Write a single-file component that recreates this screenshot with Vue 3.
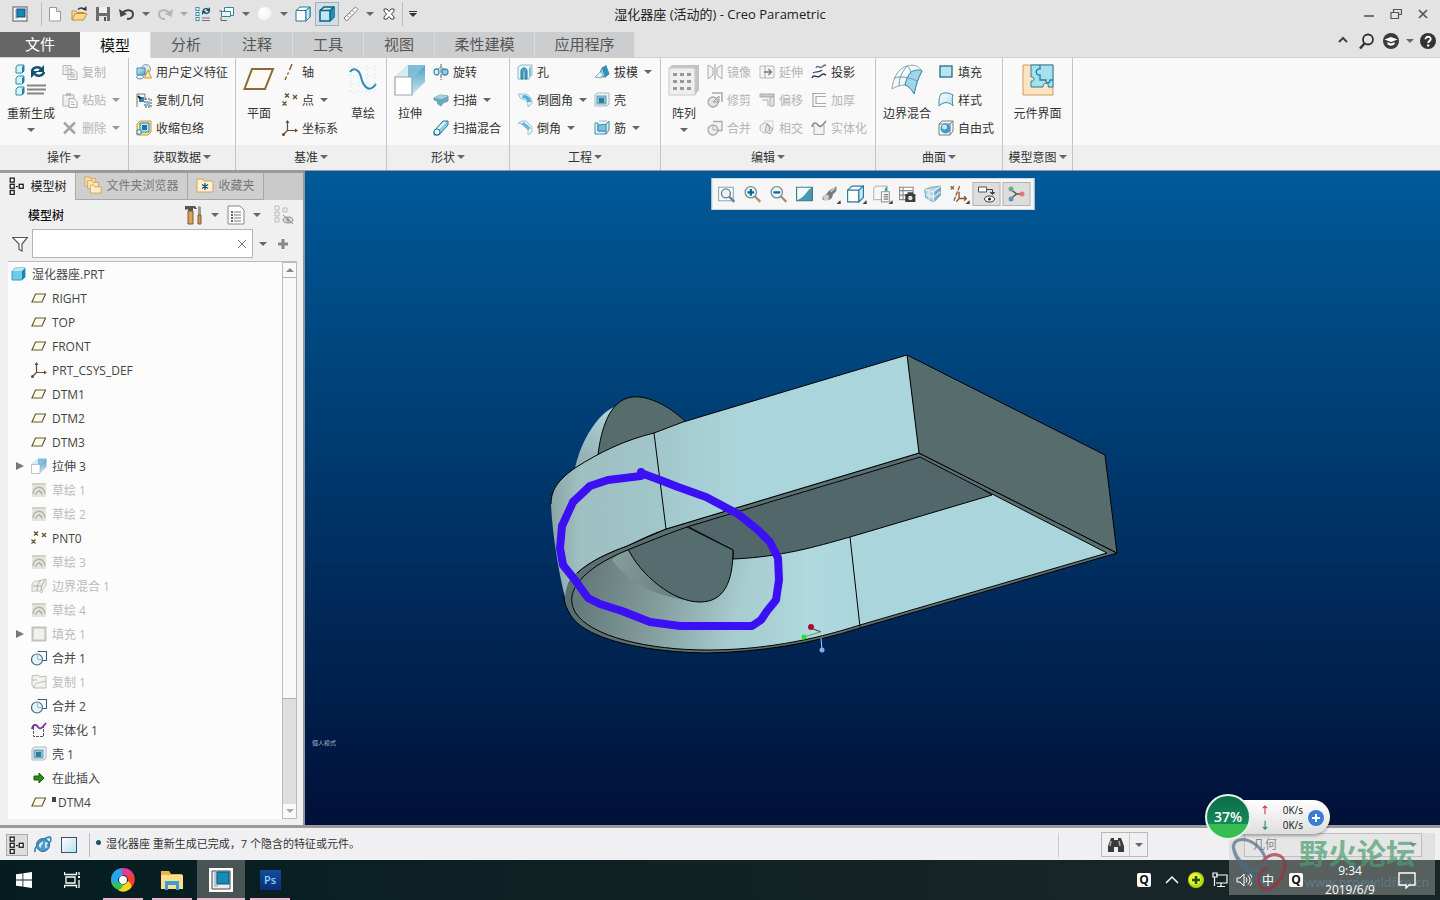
<script setup>
  import { ref } from 'vue'

  const quickTools = [
    { icon: 'new', label: '新建' },
    { icon: 'open', label: '打开' },
    { icon: 'save', label: '保存' },
    { icon: 'undo', label: '撤消', drop: true },
    { icon: 'redo', label: '重做', drop: true, disabled: true },
    { icon: 'regen-small', label: '重新生成' },
    { icon: 'windows', label: '窗口', drop: true },
    { icon: 'sphere', label: '外观', drop: true },
    { icon: 'cube', label: '消隐' },
    { icon: 'cube-shaded', label: '着色', on: true },
    { icon: 'ruler', label: '测量', drop: true },
    { icon: 'close-win', label: '关闭窗口' },
  ]

  const tabs = ['模型', '分析', '注释', '工具', '视图', '柔性建模', '应用程序']
  const activeTab = ref('模型')

  // a block is either one big button or a column of three small ones
  const groups = [
    { label: '操作', blocks: [
      { big: 'regen', text: '重新生成', drop: true, wide: true },
      { rows: [
        { icon: 'copy', text: '复制', off: true },
        { icon: 'paste', text: '粘贴', off: true, drop: true },
        { icon: 'delete', text: '删除', off: true, drop: true },
      ] },
    ] },
    { label: '获取数据', blocks: [
      { rows: [
        { icon: 'udf', text: '用户定义特征' },
        { icon: 'copygeom', text: '复制几何' },
        { icon: 'shrink', text: '收缩包络' },
      ] },
    ] },
    { label: '基准', blocks: [
      { big: 'plane-big', text: '平面' },
      { rows: [
        { icon: 'axis', text: '轴' },
        { icon: 'points', text: '点', drop: true },
        { icon: 'csys', text: '坐标系' },
      ] },
      { big: 'sketch', text: '草绘' },
    ] },
    { label: '形状', blocks: [
      { big: 'extrude', text: '拉伸' },
      { rows: [
        { icon: 'revolve', text: '旋转' },
        { icon: 'sweep', text: '扫描', drop: true },
        { icon: 'swept', text: '扫描混合' },
      ] },
    ] },
    { label: '工程', blocks: [
      { rows: [
        { icon: 'hole', text: '孔' },
        { icon: 'round', text: '倒圆角', drop: true },
        { icon: 'chamfer', text: '倒角', drop: true },
      ] },
      { rows: [
        { icon: 'draft', text: '拔模', drop: true },
        { icon: 'shell', text: '壳' },
        { icon: 'rib', text: '筋', drop: true },
      ] },
    ] },
    { label: '编辑', blocks: [
      { big: 'pattern', text: '阵列', drop: true },
      { rows: [
        { icon: 'mirror', text: '镜像', off: true },
        { icon: 'trim', text: '修剪', off: true },
        { icon: 'merge-off', text: '合并', off: true },
      ] },
      { rows: [
        { icon: 'extend', text: '延伸', off: true },
        { icon: 'offset', text: '偏移', off: true },
        { icon: 'intersect', text: '相交', off: true },
      ] },
      { rows: [
        { icon: 'project', text: '投影' },
        { icon: 'thicken', text: '加厚', off: true },
        { icon: 'solidify-off', text: '实体化', off: true },
      ] },
    ] },
    { label: '曲面', blocks: [
      { big: 'boundary', text: '边界混合', wide: true },
      { rows: [
        { icon: 'fill', text: '填充' },
        { icon: 'style', text: '样式' },
        { icon: 'freestyle', text: '自由式' },
      ] },
    ] },
    { label: '模型意图', blocks: [
      { big: 'component', text: '元件界面', full: true },
    ] },
  ]

  const tree = [
    { icon: 'plane', text: 'RIGHT' },
    { icon: 'plane', text: 'TOP' },
    { icon: 'plane', text: 'FRONT' },
    { icon: 'csys', text: 'PRT_CSYS_DEF' },
    { icon: 'plane', text: 'DTM1' },
    { icon: 'plane', text: 'DTM2' },
    { icon: 'plane', text: 'DTM3' },
    { icon: 'extrude', text: '拉伸 3', expand: true },
    { icon: 'sketch-off', text: '草绘 1', off: true },
    { icon: 'sketch-off', text: '草绘 2', off: true },
    { icon: 'points', text: 'PNT0' },
    { icon: 'sketch-off', text: '草绘 3', off: true },
    { icon: 'boundary-off', text: '边界混合 1', off: true },
    { icon: 'sketch-off', text: '草绘 4', off: true },
    { icon: 'fill-off', text: '填充 1', off: true, expand: true },
    { icon: 'merge', text: '合并 1' },
    { icon: 'copy-off', text: '复制 1', off: true },
    { icon: 'merge', text: '合并 2' },
    { icon: 'solidify', text: '实体化 1' },
    { icon: 'shell', text: '壳 1' },
    { icon: 'insert', text: '在此插入' },
    { icon: 'plane', text: 'DTM4', mark: true },
  ]

  const viewTools = [
    { icon: 'refit', label: '重新调整' },
    { icon: 'zoom-in', label: '放大' },
    { icon: 'zoom-out', label: '缩小' },
    { icon: 'repaint', label: '重画' },
    { icon: 'render', label: '渲染选项', more: true },
    { icon: 'cube', label: '显示样式', more: true },
    { icon: 'saved-view', label: '已保存方向', more: true },
    { icon: 'view-mgr', label: '视图管理器' },
    { icon: 'persp', label: '透视图' },
    { icon: 'datum', label: '基准显示', more: true },
    { icon: 'annot', label: '注释显示', on: true },
    { icon: 'spin', label: '旋转中心', on: true },
  ]

  const taskItems = [
    { icon: 'browser', label: '浏览器' },
    { icon: 'folder', label: '文件资源管理器' },
    { icon: 'creo-app', label: 'Creo Parametric', on: true },
    { icon: 'ps', label: 'Photoshop' },
  ]

  const filter = ref('')
  const scope = ref('几何')
</script>

<template>
  <div class="page">
    <svg class="sprite" aria-hidden="true">
      <defs>
        <linearGradient id="g-blue" x1="0" y1="0" x2="1" y2="1"><stop offset="0" stop-color="#d5eef8" /><stop offset="1" stop-color="#4ba3c7" /></linearGradient>
        <linearGradient id="g-pale" x1="0" y1="0" x2="1" y2="1"><stop offset="0" stop-color="#fff" /><stop offset="1" stop-color="#b4dff0" /></linearGradient>
        <linearGradient id="g-side" x1="0" y1="0" x2="0" y2="1"><stop offset="0" stop-color="#4f9fc2" /><stop offset="1" stop-color="#c9e8f2" /></linearGradient>
        <radialGradient id="g-ball" cx=".35" cy=".3" r=".8"><stop offset="0" stop-color="#fff" /><stop offset=".75" stop-color="#f4f4f4" /><stop offset="1" stop-color="#cfcfcf" /></radialGradient>
      </defs>

      <symbol id="creo" viewBox="0 0 16 16"><rect x="1" y="1" width="14" height="14" fill="#fff" stroke="#556" stroke-width="1" /><rect x="3" y="3" width="3" height="10" fill="#b9cbd4" /><rect x="5" y="3" width="8" height="8" fill="#1686b4" stroke="#144f72" /></symbol>
      <symbol id="new" viewBox="0 0 16 16"><path d="M2.500 1.500h7l4 4v9.500h-11z" fill="#fff" stroke="#999" /><path d="M9.500 1.500v4h4" fill="#eee" stroke="#999" /></symbol>
      <symbol id="open" viewBox="0 0 16 16"><path d="M1 14V5h4l1 1.500h7V9" fill="#f8e0a0" stroke="#c58f36" /><path d="M1 14l3-6.500h12L12.500 14z" fill="#fbd98a" stroke="#c58f36" /><path d="M7 3.500c2-2 4-2 6-.500" fill="none" stroke="#333" stroke-width="1.500" /><path d="M15.500 0v5l-4-1.500z" fill="#333" /></symbol>
      <symbol id="save" viewBox="0 0 16 16"><path d="M1 1h14v14H1z" fill="#6d6d6d" /><path d="M4 1h8v6H4z" fill="#f0f0f0" /><path d="M4 10h8v5H4z" fill="#e2e2e2" /><path d="M9 11h2v4H9z" fill="#555" /></symbol>
      <symbol id="undo" viewBox="0 0 16 16"><path d="M3 8C6 3 14 3 14 8.500c0 3-3 4.500-6 4.500" fill="none" stroke="#444" stroke-width="2" /><path d="M0 3l1.500 8L8 8z" fill="#444" /></symbol>
      <symbol id="redo" viewBox="0 0 16 16"><path d="M13 8C10 3 2 3 2 8.500 2 11.500 5 13 8 13" fill="none" stroke="#b5b5b5" stroke-width="2" /><path d="M16 3l-1.500 8L8 8z" fill="#b5b5b5" /></symbol>
      <symbol id="regen-small" viewBox="0 0 16 16"><g fill="#fff" stroke="#3a8fb5"><rect x="1" y="1.500" width="3" height="3" /><rect x="1" y="6.500" width="3" height="3" /><rect x="1" y="11.500" width="3" height="3" /></g><path d="M7 12h8M7 14.500h8" stroke="#777" /><path d="M8 5c1-3 4-3 5.500-1M14.500 5c-1 3-4 3-5.500 1" fill="none" stroke="#0f5974" stroke-width="1.500" /><path d="M15 1v4h-4zM7 9V5h4z" fill="#0f5974" /></symbol>
      <symbol id="windows" viewBox="0 0 16 16"><path d="M5.500 1.500h9v8h-9z" fill="#fff" stroke="#3b7fa0" /><path d="M2.500 5.500h9v5h-9z" fill="#e8f6fb" stroke="#3b7fa0" /><path d="M2 11v3.500h6M0 5h3" fill="none" stroke="#666" /></symbol>
      <symbol id="sphere" viewBox="0 0 16 16"><circle cx="8" cy="8" r="7" fill="url(#g-ball)" /></symbol>
      <symbol id="cube" viewBox="0 0 16 16"><path d="M1 4.500l4-3.500h10v10l-4 4H1z" fill="#fff" stroke="#23789b" /><path d="M1 4.500h10V15M11 4.500L15 1" fill="none" stroke="#23789b" /><path d="M11 4.500L15 1v10l-4 4z" fill="#c6e9f3" stroke="#23789b" /></symbol>
      <symbol id="cube-shaded" viewBox="0 0 16 16"><path d="M1 4.500l4-3.500h10v10l-4 4H1z" fill="#bfe7f2" stroke="#0f5f84" stroke-width="1.500" /><path d="M11 4.500L15 1v10l-4 4z" fill="#1c93b8" /><path d="M1 4.500h10V15M11 4.500L15 1" fill="none" stroke="#0f5f84" stroke-width="1.500" /></symbol>
      <symbol id="ruler" viewBox="0 0 16 16"><path d="M1 12L12.500 1 15 3.500 3.500 15z" fill="#fff" stroke="#777" /><path d="M4 9.500l1.500 1.500M6.500 7l1.500 1.500M9 4.500l1.500 1.500" stroke="#777" /></symbol>
      <symbol id="close-win" viewBox="0 0 16 16"><path d="M3 3h3l2 2.500L10 3h3v2l-2.500 3 2.500 3v2h-3l-2-2.500L6 13H3v-2l2.500-3L3 5z" fill="#fff" stroke="#444" /></symbol>

      <symbol id="regen" viewBox="0 0 32 32"><g fill="#d9f1f9" stroke="#2c8bb2"><path d="M1 3l2-2h6v6L7 9H1zM1 14l2-2h6v6l-2 2H1zM1 25l2-2h6v6l-2 2H1z" /></g><path d="M7 3v6l2-2V1zM7 14v6l2-2v-6zM7 25v6l2-2v-6z" fill="#1f7fa8" /><path d="M12 21.500h19M12 25.500h19M12 29.500h17" stroke="#858585" stroke-width="2" /><path d="M17 7c1-4 7-5 9-2M29 8c-1 4-7 5-9 2" fill="none" stroke="#0e536b" stroke-width="2.500" /><path d="M29 1v7h-7zM16 14V7h7z" fill="#0e536b" /></symbol>
      <symbol id="copy" viewBox="0 0 16 16"><path d="M1 1.500h8v9H1zM6 5.500h6l3 3v7H6z" fill="#f4f4f4" stroke="#b3b3b3" /><path d="M3 4h4M3 6.500h2M8 9h4M8 11h5M8 13h5" stroke="#b3b3b3" /></symbol>
      <symbol id="paste" viewBox="0 0 16 16"><path d="M1 3h11v11H1z" fill="#f0f0f0" stroke="#b3b3b3" /><path d="M4 1h5v3H4z" fill="#bbb" /><path d="M7 6.500h5l3 3v6H7z" fill="#fafafa" stroke="#aaa" /><path d="M9 10h3M9 12.500h4" stroke="#b3b3b3" /></symbol>
      <symbol id="delete" viewBox="0 0 16 16"><path d="M2 2.500L13 13.500M13 2.500L2 13.500" stroke="#a5a5a5" stroke-width="2.500" /></symbol>
      <symbol id="udf" viewBox="0 0 16 16"><circle cx="10" cy="5" r="4.500" fill="#dbe3ec" stroke="#8a9aaa" /><path d="M1 4h8v7H1z" fill="url(#g-blue)" stroke="#3f8cae" /><path d="M12 6l3.500 8h-7z" fill="#fbe5ab" stroke="#c89a3e" /><ellipse cx="4" cy="13" rx="3.500" ry="2" fill="#e9f3f8" stroke="#5e93b0" /></symbol>
      <symbol id="copygeom" viewBox="0 0 16 16"><path d="M1 2v13M1 2h8v5" fill="none" stroke="#777" /><rect x="3" y="5" width="5" height="5" fill="#2c88ae" /><path d="M9 7h6v8H9z" fill="#fff" stroke="#444" stroke-dasharray="2 1" /><path d="M10 9h4v5h-4z" fill="#7ec1e0" /><path d="M2 4l3 3" stroke="#222" stroke-width="2" /></symbol>
      <symbol id="shrink" viewBox="0 0 16 16"><path d="M1 4l3-3h11v11l-3 3H1z" fill="#ffe49b" stroke="#c99b36" /><path d="M4 3h9v9H4z" fill="#bfe4f2" stroke="#2a83ab" /><path d="M6 5h5v5H6z" fill="#1b79a4" /><path d="M1 10h4v4H1z" fill="#fff" stroke="#2a83ab" /></symbol>
      <symbol id="plane-big" viewBox="0 0 32 32"><path d="M9 5h21L22 25H1.500z" fill="#fdfaf3" stroke="#8a6b35" stroke-width="2" /></symbol>
      <symbol id="plane" viewBox="0 0 16 16"><path d="M4.500 4h10L11 12H1z" fill="#fffbe9" stroke="#6a5b36" stroke-width="1.200" /></symbol>
      <symbol id="axis" viewBox="0 0 16 16"><path d="M10 0L7.500 6M6.500 8.500L5.500 10.500M4.500 12.500L3 16" stroke="#7b4f30" stroke-width="1.300" /></symbol>
      <symbol id="points" viewBox="0 0 16 16"><path d="M3 1.500l4 4M7 1.500l-4 4M11 3l4 4M15 3l-4 4M0.500 9.500l4 4M4.500 9.500l-4 4" stroke="#6d5a30" stroke-width="1.400" /></symbol>
      <symbol id="csys" viewBox="0 0 16 16"><path d="M5.500 1.500V10.500H15M5.500 10.500L1.500 14.500" fill="none" stroke="#6b4a33" stroke-width="1.200" /><path d="M5.500 0l2 3h-4zM16 10.500l-3-2v4z" fill="#6b4a33" /><circle cx="1.500" cy="14.500" r="1.500" fill="#6b4a33" /></symbol>
      <symbol id="sketch" viewBox="0 0 32 32"><path d="M4 2v28M12 2v28M20 2v28M28 2v28M2 4h28M2 12h28M2 20h28M2 28h28" stroke="#ccd8de" stroke-dasharray="1 3" /><path d="M3 8c3-5 9-3 11 5 2 9 8 17 15 7" fill="none" stroke="#2b8bb5" stroke-width="2" /></symbol>
      <symbol id="extrude" viewBox="0 0 32 32"><path d="M1 13L14 1h17L18 13z" fill="#7dbdd7" /><path d="M1 13L14 1v12z" fill="#d5ecf4" /><path d="M18 13L31 1v17L18 31z" fill="url(#g-side)" /><path d="M1 13h17v18H1z" fill="#fff" stroke="#97a5ab" stroke-width="1.200" /></symbol>
      <symbol id="revolve" viewBox="0 0 16 16"><path d="M8 0v16" stroke="#6f5b46" stroke-dasharray="4 1" /><ellipse cx="3.500" cy="8" rx="2.500" ry="3" fill="#d8f0f8" stroke="#3f93b8" stroke-width="1.300" /><ellipse cx="12" cy="8" rx="3" ry="3" fill="#8fcbe4" stroke="#3f93b8" stroke-width="1.300" /><path d="M5 5c2-2 5-1 6 0" fill="none" stroke="#3f93b8" /></symbol>
      <symbol id="sweep" viewBox="0 0 16 16"><path d="M1 6l6-3 8 1v5l-5 2-2 3-3-2-1-3-3-1z" fill="#6ba7bd" stroke="#6b9fb3" /><path d="M1 6l6-3 8 1-6 3z" fill="#a9d0dd" /></symbol>
      <symbol id="swept" viewBox="0 0 16 16"><path d="M1 11L10 1h5v4L6 15H1z" fill="#90cde4" stroke="#27779b" /><path d="M3 11L12 2" stroke="#e4f5fb" stroke-width="2" /><ellipse cx="4" cy="12" rx="3" ry="3" fill="#e4f5fb" stroke="#27779b" /></symbol>
      <symbol id="hole" viewBox="0 0 16 16"><path d="M1 3l3-2h11v10l-3 3v1H1z" fill="#e8f5fa" stroke="#8db9cb" /><path d="M4 15V7c0-4 6-4 6 0v8H8V7.500c0-1-2-1-2 0V15z" fill="#58aacd" stroke="#227799" /><path d="M12 4l2-2v9l-2 2z" fill="#7fbfd8" /></symbol>
      <symbol id="round" viewBox="0 0 16 16"><path d="M1 2h6c5 0 8 4 8 9l-4 4C11 10 9 7 4 7z" fill="#dff2f9" stroke="#9dc3d2" /><path d="M6 3c5 0 8 3 8 7l-4 0C10 7 8 6 5 6z" fill="#56adce" /></symbol>
      <symbol id="chamfer" viewBox="0 0 16 16"><path d="M1 3l4-2h4l6 6v5l-4 3V9L6 4z" fill="#e8f5fa" stroke="#9dc3d2" /><path d="M4 4l3-2 7 6-3 2z" fill="#6cb9d6" /></symbol>
      <symbol id="draft" viewBox="0 0 16 16"><path d="M1 13h9l5-3-3-8-4 2-2 5z" fill="#8ccae2" stroke="#3c8dad" /><path d="M8 4l4-3 3 9-4 4z" fill="#348fb5" /><path d="M1 13l5-5 3 2-2 4z" fill="#dff2f9" stroke="#8fb6c4" /></symbol>
      <symbol id="shell" viewBox="0 0 16 16"><path d="M1 3l2-2h12v11l-2 2H1z" fill="#edf3f5" stroke="#a7b9c0" /><rect x="3" y="4" width="9" height="8" fill="#86bfd5" stroke="#6ba0b6" /><rect x="5" y="6" width="5" height="5" fill="#2f7d9e" /></symbol>
      <symbol id="rib" viewBox="0 0 16 16"><path d="M1 3h3v8h8v3H1z" fill="#dff2f9" stroke="#3c8dad" /><path d="M4 5l9-1v7H4z" fill="#7bbfda" stroke="#3c8dad" /><path d="M12 4l3-3v9l-3 4z" fill="#cbe8f2" stroke="#3c8dad" /><path d="M5 1h8" stroke="#9bc" /></symbol>
      <symbol id="pattern" viewBox="0 0 32 32"><path d="M1 4l3-3h27v25l-4 5H1z" fill="#c3c3c3" /><path d="M1 4h26v27H1z" fill="#eee" stroke="#c9c9c9" /><path d="M5 9h4v3H5zM12 9h4v3h-4zM19 9h4v3h-4zM5 16h4v3H5zM12 16h4v3h-4zM19 16h4v3h-4zM5 23h4v3H5zM12 23h4v3h-4zM19 23h4v3h-4z" fill="#999" /></symbol>
      <symbol id="mirror" viewBox="0 0 16 16"><path d="M1 1l5 3v7l-5 4zM15 1l-5 3v7l5 4z" fill="#f3f3f3" stroke="#aaa" /><path d="M8 0v16" stroke="#999" /></symbol>
      <symbol id="trim" viewBox="0 0 16 16"><path d="M5 1h10v9" fill="none" stroke="#aaa" stroke-width="1.500" /><circle cx="6" cy="10" r="5" fill="#e4e4e4" stroke="#aaa" stroke-width="1.300" /><path d="M6 10l6-6M12 4v6H6" stroke="#999" fill="none" /></symbol>
      <symbol id="merge-off" viewBox="0 0 16 16"><path d="M6 1.500h9v9H9" fill="#f3f3f3" stroke="#aaa" stroke-width="1.300" /><circle cx="6" cy="10" r="5" fill="#eee" stroke="#aaa" stroke-width="1.300" /><path d="M6 10h5M6 5v5" stroke="#aaa" /></symbol>
      <symbol id="extend" viewBox="0 0 16 16"><path d="M1 2h14v12H1z" fill="#f4f4f4" stroke="#bbb" /><path d="M6 2v12" stroke="#aaa" /><path d="M5 8h7M9.500 5l3 3-3 3" fill="none" stroke="#777" stroke-width="1.300" /></symbol>
      <symbol id="offset" viewBox="0 0 16 16"><path d="M1 2h14v3H1z" fill="#ccc" stroke="#aaa" /><path d="M11 5h4v9h-4z" fill="#e4e4e4" stroke="#aaa" /><path d="M3 8h6v6" fill="none" stroke="#aaa" /></symbol>
      <symbol id="intersect" viewBox="0 0 16 16"><path d="M5 1h9v8" fill="none" stroke="#ccc" /><circle cx="6" cy="8" r="5" fill="#eee" stroke="#bbb" /><path d="M8 4l6 5-3 5-5-3z" fill="#e4e4e4" stroke="#aaa" /><path d="M8 4c3 2 3 5 2 7" fill="none" stroke="#888" /></symbol>
      <symbol id="project" viewBox="0 0 16 16"><path d="M5 4c1-4 4 1 6-1s3-2 4-2" fill="none" stroke="#5c6c7c" stroke-width="1.300" /><path d="M1 14c2-5 5 1 8-2s4-2 6-1" fill="none" stroke="#34345c" stroke-width="1.500" /><path d="M2 9c3-2 6 0 9-3" fill="none" stroke="#42426c" stroke-width="1.300" /></symbol>
      <symbol id="thicken" viewBox="0 0 16 16"><path d="M15 1.500H1M1 14.500h14M2 2v12M15 4.500H5v7h10" fill="none" stroke="#aaa" stroke-width="1.200" /></symbol>
      <symbol id="solidify-off" viewBox="0 0 16 16"><path d="M3 5v9.500h10V5" fill="#f2f2f2" stroke="#aaa" /><path d="M1 7c1-5 4-5 6-2s4 1 8-4" fill="none" stroke="#8d8d8d" stroke-width="1.600" /></symbol>
      <symbol id="solidify" viewBox="0 0 16 16"><path d="M2.500 5v9.500h10V5" fill="#fff" stroke="#555" stroke-dasharray="3 1" /><path d="M1 7c1-5 4-5 6-2s4 1 8-4" fill="none" stroke="#7b2f96" stroke-width="1.800" /></symbol>
      <symbol id="boundary" viewBox="0 0 32 32"><path d="M1 25C2 13 8 4 16 2c7-2 12 0 15 5-4 7-6 14-8 23-2-5-6-8-9-9-5 0-10 2-13 4z" fill="#f3fafc" stroke="#94a7ae" /><path d="M20 8c4-2 8-3 11-1-4 7-6 14-8 23-2-4-5-8-9-9 1-5 3-10 6-13z" fill="#9fd6eb" stroke="#2f88ab" /><path d="M3 14c6-2 15-1 23 3M16 2c-5 6-8 12-8 20M16 2c2 1 3 3 4 6" fill="none" stroke="#6f9aac" /></symbol>
      <symbol id="boundary-off" viewBox="0 0 16 16"><path d="M1 14V7c1-4 3-4 6-4l8-2v7c-2 1-3 3-4 7-3-2-6-3-10-1z" fill="#efefea" stroke="#c5c5bd" /><path d="M6 13c0-5 1-8 4-11M10 13c0-5 2-8 4-11M2 8h9" fill="none" stroke="#adada5" /></symbol>
      <symbol id="fill" viewBox="0 0 16 16"><rect x="2" y="2" width="12" height="11" fill="#b9e5f2" stroke="#1b708f" stroke-width="1.300" /></symbol>
      <symbol id="fill-off" viewBox="0 0 16 16"><rect x="1.500" y="1.500" width="13" height="13" fill="#f1f1ec" stroke="#c2c2ba" stroke-width="2" /></symbol>
      <symbol id="style" viewBox="0 0 16 16"><path d="M1 14C1 8 1 5 3 2c4-2 8-1 12 1-1 3-1 7 0 11-3-4-9-5-14 0z" fill="url(#g-pale)" stroke="#3488ab" /></symbol>
      <symbol id="freestyle" viewBox="0 0 16 16"><path d="M1 4l3-3h11v10l-3 4H1z" fill="none" stroke="#6a7e88" /><path d="M1 4h11v11M12 4l3-3" fill="none" stroke="#6a7e88" /><circle cx="7.500" cy="8.500" r="5" fill="#3b9cc4" /><circle cx="6.500" cy="7" r="2.500" fill="#c6e9f5" /></symbol>
      <symbol id="component" viewBox="0 0 32 32"><path d="M1 1h30v30H1z" fill="#fde3bf" stroke="#cf9b62" /><path d="M9 1h22v22h-5c2-5-6-5-5 0h-4v0H9v-6c4 1 4-5 0-4z" fill="#a8e0ee" stroke="#2180a0" /><path d="M18 1v4c-5-1-5 7 0 6v5h6c-1 4 4 4 4 0h3" fill="none" stroke="#2180a0" stroke-width="1.300" /></symbol>
      <symbol id="merge" viewBox="0 0 16 16"><path d="M6.500 1.500h9v9h-5" fill="#fff" stroke="#35637d" stroke-width="1.200" /><circle cx="6" cy="9.500" r="5.500" fill="#e3f3f9" stroke="#466a88" stroke-width="1.200" /><path d="M6.500 4.500v5h5" fill="none" stroke="#92bfd2" /></symbol>
      <symbol id="sketch-off" viewBox="0 0 16 16"><rect x="1" y="1" width="14" height="14" fill="#e5e5df" /><path d="M2 12c1-9 11-9 12 0M5 13c0-5 6-5 6 0M8 8l2 3" fill="none" stroke="#b5b5ab" stroke-width="1.300" /><path d="M1 1h14v2H1z" fill="#d2d2ca" /></symbol>
      <symbol id="copy-off" viewBox="0 0 16 16"><path d="M1 2l5-1 4 2 5-1v12H3l-2-3z" fill="#f2f2ee" stroke="#bcbcb4" /><path d="M3 14c0-6 6-5 12-7M1 6h5" fill="none" stroke="#bcbcb4" /></symbol>
      <symbol id="insert" viewBox="0 0 16 16"><path d="M3 6h5V3l5 5-5 5v-3H3z" fill="#2d8a12" stroke="#1c5c0a" /></symbol>
      <symbol id="part" viewBox="0 0 16 16"><path d="M1 5l3-3h10v9l-3 3H1z" fill="#6ccbe8" stroke="#3c9cc0" /><path d="M11 5l3-3v9l-3 3z" fill="#1f84ac" /><path d="M1 5l3-3h10l-3 3z" fill="#b9e9f6" /></symbol>

      <symbol id="tree-ico" viewBox="0 0 16 16"><g fill="#fff" stroke="#222" stroke-width="1.200"><rect x="2" y="1" width="3.500" height="3.500" /><rect x="2" y="6.500" width="3.500" height="3.500" /><rect x="2" y="12" width="3.500" height="3.500" /><rect x="10" y="6.500" width="3.500" height="3.500" /></g><path d="M7 8.500h2" stroke="#222" /></symbol>
      <symbol id="folders" viewBox="0 0 20 20"><path d="M1 1h5l1 2h6v8H1z" fill="#fae2a7" stroke="#d3a353" /><path d="M4 5h5l1 2h6v7H4z" fill="#fbe7b6" stroke="#d3a353" /><path d="M7 10h4l1 2h7v7H7z" fill="#fdeec9" stroke="#d3a353" /></symbol>
      <symbol id="favorite" viewBox="0 0 18 18"><path d="M1 3h6l1 2h9v11H1z" fill="#fdf0d3" stroke="#d3a353" /><path d="M9 7v7M6 8.500l6 4M12 8.500l-6 4" stroke="#124a72" stroke-width="1.200" /></symbol>
      <symbol id="tools" viewBox="0 0 20 20"><path d="M1 1h10l2 3h-2l-2-1v3H4V4L1 5z" fill="#555" /><path d="M4 6h5v13H4z" fill="#d6a45f" stroke="#84592a" /><path d="M15 1l2 1v8h-3V2z" fill="#999" /><path d="M14 10h3v9h-3z" fill="#c99a5a" stroke="#84592a" /></symbol>
      <symbol id="list" viewBox="0 0 20 20"><path d="M2 1h12l4 4v14H2z" fill="#fff" stroke="#888" /><path d="M5 7h2M5 10h2M5 13h2M5 16h2" stroke="#333" stroke-width="1.500" /><path d="M8 7h7M8 10h7M8 13h7M8 16h7" stroke="#777" /></symbol>
      <symbol id="tree-eye" viewBox="0 0 20 20"><path d="M1 1h4v4H1zM1 7h4v4H1zM1 13h4v4H1zM9 3h4v4H9z" fill="none" stroke="#bbb" /><ellipse cx="14" cy="15" rx="5" ry="3" fill="#ddd" stroke="#888" /><circle cx="14" cy="15" r="1.500" fill="#888" /><path d="M9 10l10 9" stroke="#888" /></symbol>
      <symbol id="funnel" viewBox="0 0 16 16"><path d="M.500 1.500h15L10 8v7l-3-1.500V8z" fill="#fff" stroke="#555" stroke-width="1.200" /></symbol>
      <symbol id="plus" viewBox="0 0 12 12"><path d="M6 1v10M1 6h10" stroke="#888" stroke-width="3" /></symbol>
      <symbol id="cross" viewBox="0 0 12 12"><path d="M2 2l8 8M10 2l-8 8" stroke="#777" /></symbol>

      <symbol id="refit" viewBox="0 0 16 16"><path d="M1 2h13v12H1z" fill="#fff" stroke="#8aa6b6" /><circle cx="7.500" cy="7.500" r="4" fill="#e8f5fa" stroke="#5c7f94" stroke-width="1.200" /><path d="M10.500 10.500L15 15" stroke="#5c7f94" stroke-width="2" /></symbol>
      <symbol id="zoom-in" viewBox="0 0 16 16"><path d="M10 10l5 5" stroke="#b08a72" stroke-width="2" /><circle cx="6.500" cy="6.500" r="5" fill="#eef8fc" stroke="#7390a2" stroke-width="1.200" /><path d="M6.500 3.500v6M3.500 6.500h6" stroke="#126488" stroke-width="2" /></symbol>
      <symbol id="zoom-out" viewBox="0 0 16 16"><path d="M10 10l5 5" stroke="#b08a72" stroke-width="2" /><circle cx="6.500" cy="6.500" r="5" fill="#eef8fc" stroke="#7390a2" stroke-width="1.200" /><path d="M3.500 6.500h6" stroke="#126488" stroke-width="2" /></symbol>
      <symbol id="repaint" viewBox="0 0 16 16"><path d="M1 2h14v12H1z" fill="#4b97ae" stroke="#3b7488" /><path d="M1.500 2.500h13C10 4 9 11 1.500 13.500z" fill="#f2fafc" /></symbol>
      <symbol id="render" viewBox="0 0 16 16"><path d="M2 13c-1-4 3-4 4-6s3-3 8-6c1 4-1 6-3 7 0 3-2 7-9 5z" fill="#7b7b7b" /><circle cx="5" cy="11" r="2.500" fill="#d0d0d0" /><path d="M9 6l4-4" stroke="#ccc" stroke-width="1.500" /></symbol>
      <symbol id="saved-view" viewBox="0 0 16 16"><path d="M1 3l2-2h10v10l-2 2H1z" fill="#f6f6f6" stroke="#bbb" /><path d="M11 3l2-2v9l-2 2z" fill="#39a0be" /><path d="M8 6h7v9H8z" fill="#fff" stroke="#999" /><path d="M10 8.500h4M10 10.500h4M10 12.500h4" stroke="#777" /></symbol>
      <symbol id="view-mgr" viewBox="0 0 16 16"><path d="M1 2h12v11H1zM1 5h12M1 9h8M4 2v11" fill="#fff" stroke="#888" /><path d="M6 8h9v7H6z" fill="#3c3c3c" /><path d="M8 6.500h5V8H8z" fill="#3c3c3c" /><circle cx="10.500" cy="11.500" r="2" fill="#ddd" /></symbol>
      <symbol id="persp" viewBox="0 0 16 16"><path d="M1 4l6-2 8-1v8l-6 6-7-4z" fill="#b7d7e4" stroke="#7ba6ba" /><path d="M9 6l6-5v8l-6 6z" fill="#78acc3" /><path d="M1 4l8 2 6-5M9 6v9M5 5v8M2 8l7 3 6-5" fill="none" stroke="#e7f4f9" /></symbol>
      <symbol id="datum" viewBox="0 0 16 16"><path d="M1 1l3 3M4 1L1 4M9 1L4 14" stroke="#8b5a36" stroke-width="1.200" stroke-dasharray="4 1" /><path d="M8.500 6v6H15M8.500 12L6 15M13 10l2 2-2 2" fill="none" stroke="#8b5a36" stroke-width="1.200" /></symbol>
      <symbol id="annot" viewBox="0 0 18 18"><path d="M1 2h8v5H1z" fill="#fff" stroke="#555" /><path d="M9 4.500h6v5" fill="none" stroke="#444" /><path d="M12 7l3 3 3-3" fill="#444" /><ellipse cx="12" cy="14" rx="5" ry="3" fill="#fff" stroke="#333" /><circle cx="12" cy="14" r="1.500" fill="#222" /></symbol>
      <symbol id="spin" viewBox="0 0 18 18"><path d="M3 4l6 5 6 0M9 9l-6 5" stroke="#555" stroke-width="1.500" fill="none" /><circle cx="3.500" cy="4" r="2.500" fill="#6aa98a" /><circle cx="14.500" cy="9" r="2.500" fill="#dd7a74" /><circle cx="3.500" cy="14" r="2.500" fill="#5f94c0" /></symbol>

      <symbol id="minimize" viewBox="0 0 12 12"><path d="M1 8h10" stroke="#555" stroke-width="1.600" /></symbol>
      <symbol id="restore" viewBox="0 0 12 12"><path d="M3.500 4V1.500h8v5H9M1 4.500h7.500v6H1z" fill="none" stroke="#555" stroke-width="1.200" /></symbol>
      <symbol id="close" viewBox="0 0 12 12"><path d="M2 2l8 8M10 2l-8 8" stroke="#555" stroke-width="1.700" /></symbol>
      <symbol id="collapse" viewBox="0 0 16 16"><path d="M4 9l4-4 4 4" fill="none" stroke="#444" stroke-width="2" /></symbol>
      <symbol id="search" viewBox="0 0 16 16"><circle cx="9" cy="6.500" r="5" fill="none" stroke="#333" stroke-width="1.800" /><path d="M5.500 10.500L1 15.500" stroke="#333" stroke-width="2.500" /></symbol>
      <symbol id="learn" viewBox="0 0 16 16"><circle cx="8" cy="8" r="8" fill="#3a3a3a" /><path d="M1.500 6.500L8 4l6.500 2.500L8 9z" fill="#fff" /><path d="M4.500 9v2.500c2 1.500 5 1.500 7 0V9L8 10.500z" fill="#fff" /></symbol>
      <symbol id="help" viewBox="0 0 16 16"><circle cx="8" cy="8" r="8" fill="#333" /><path d="M5.500 6.300C5.500 2.800 11 3 10.700 6.200 10.500 8 8.200 7.900 8.200 10" fill="none" stroke="#fff" stroke-width="1.900" /><circle cx="8.200" cy="12.500" r="1.200" fill="#fff" /></symbol>

      <symbol id="globe" viewBox="0 0 18 18"><circle cx="9" cy="9" r="6.500" fill="#4b9ccc" stroke="#23688f" /><path d="M5 7c2-4 5-2 4 0s-2 2-2 4-3 0-2-4zM11 6l3 1v4l-3 1z" fill="#d5ecf6" /><path d="M1 16C0 11 8 2 16 1c2 2 0 6-3 9" fill="none" stroke="#3c8bb8" stroke-width="1.800" /></symbol>
      <symbol id="page-ico" viewBox="0 0 18 18"><rect x="1.500" y="1.500" width="15" height="15" fill="url(#g-pale)" stroke="#33566c" /></symbol>
      <symbol id="binoc" viewBox="0 0 18 18"><path d="M4 2h3v2h4V2h3l3 8v6h-6v-5H7v5H1v-6z" fill="#3b3b3b" /><path d="M4 5l-1 5M12 5l1 5" stroke="#aaa" stroke-width="1.500" /></symbol>

      <symbol id="start" viewBox="0 0 16 16"><path d="M0 2.300l6.500-.900v6.100H0zM7.300 1.300L16 0v7.500H7.300zM0 8.400h6.500v6.200L0 13.700zM7.300 8.400H16V16l-8.700-1.200z" fill="#fff" /></symbol>
      <symbol id="taskview" viewBox="0 0 16 16"><path d="M2 5h9v6H2zM.500 0v2.500h12V0M.500 16v-2.500h12V16M15 0v3M15 8v8" fill="none" stroke="#fff" stroke-width="1.300" /><path d="M14 4h2v2h-2z" fill="#fff" /></symbol>
      <symbol id="browser" viewBox="0 0 24 24"><path d="M12 0c6 0 9 3 11 7l-6 5c0-4-3-6-8-4-1-3 0-6 3-8z" fill="#e33aa0" /><path d="M23 7c2 6 0 10-3 13l-6-3c4-2 4-6 1-9 3-2 6-2 8-1z" fill="#f0402f" /><path d="M20 20c-5 5-10 4-13 2l1-7c3 3 7 2 9-2 3 2 4 5 3 7z" fill="#f7d41d" /><path d="M8 22c-6-2-8-6-8-10l6-3c-1 4 2 7 6 7 0 3-2 5-4 6z" fill="#35c24a" /><path d="M0 12C0 5 5 0 12 0c-2 3-2 5 0 8-4 0-6 3-4 7-4 1-7-1-8-3z" fill="#2ba3e8" /><circle cx="12" cy="12" r="4" fill="#fff" /></symbol>
      <symbol id="folder" viewBox="0 0 24 24"><path d="M1 3h8l2 3h11v15H1z" fill="#e9b64e" /><path d="M1 7h22v14H1z" fill="#fbe08c" /><path d="M5 13h14v9h-3v-5H8v5H5z" fill="#3f9ed4" /></symbol>
      <symbol id="creo-app" viewBox="0 0 24 24"><path d="M0 0h24v24H0z" fill="#fff" /><path d="M3 3h18v18H3z" fill="#eee" stroke="#445" /><path d="M5 4h4v15H5z" fill="#b8c7cf" /><path d="M8 4h12v12H8z" fill="#168cb9" stroke="#10546f" /></symbol>
      <symbol id="tray-up" viewBox="0 0 16 16"><path d="M2 11l6-6 6 6" fill="none" stroke="#fff" stroke-width="1.500" /></symbol>
      <symbol id="tray-ball" viewBox="0 0 16 16"><circle cx="8" cy="8" r="8" fill="#b4d80f" /><circle cx="7" cy="7" r="6" fill="#eef03a" /><path d="M8 4v8M4 8h8" stroke="#1c5211" stroke-width="2.500" /></symbol>
      <symbol id="tray-net" viewBox="0 0 16 16"><path d="M4 3h11v8H4M9 11v3M5 14.500h8M1 1h4v4H1zM2.500 5v9" fill="none" stroke="#fff" stroke-width="1.200" /></symbol>
      <symbol id="tray-vol" viewBox="0 0 16 16"><path d="M1 6h3l4-4v12l-4-4H1z" fill="none" stroke="#fff" /><path d="M10 5.500q2 2.500 0 5M12 3.500q4 4.500 0 9M14 2q5 6 0 12" fill="none" stroke="#fff" /></symbol>
      <symbol id="notify" viewBox="0 0 18 18"><path d="M1 2h16v12h-6l-3 3v-3H1z" fill="none" stroke="#fff" stroke-width="1.400" /></symbol>
    </svg>

    <header class="titlebar">
      <div class="quick">
        <button class="logo" aria-label="Creo"><svg><use href="#creo" /></svg></button>
        <span class="bar"></span>
        <template v-for="t in quickTools" :key="t.label">
          <button class="tool" :class="{ on: t.on }" :aria-label="t.label"><svg><use :href="'#' + t.icon" /></svg></button>
          <button v-if="t.drop" class="drop" :aria-label="t.label + '选项'"><i class="tri" :class="{ pale: t.disabled }"></i></button>
        </template>
        <span class="bar"></span>
        <button class="drop custom" aria-label="自定义"><i class="tri"></i></button>
      </div>
      <h1>湿化器座 (活动的) - Creo Parametric</h1>
      <div class="winctl">
        <button aria-label="最小化"><svg><use href="#minimize" /></svg></button>
        <button aria-label="还原"><svg><use href="#restore" /></svg></button>
        <button aria-label="关闭"><svg><use href="#close" /></svg></button>
      </div>
    </header>

    <nav class="tabs">
      <button class="file">文件</button>
      <button v-for="t in tabs" :key="t" :class="{ active: t === activeTab, long: t.length > 2 }" @click="activeTab = t">{{ t }}</button>
      <div class="help">
        <button aria-label="折叠"><svg><use href="#collapse" /></svg></button>
        <button aria-label="搜索"><svg><use href="#search" /></svg></button>
        <button aria-label="学习"><svg><use href="#learn" /></svg></button>
        <button class="drop" aria-label="更多"><i class="tri"></i></button>
        <button aria-label="帮助"><svg><use href="#help" /></svg></button>
      </div>
    </nav>

    <section class="ribbon">
      <div v-for="g in groups" :key="g.label" class="group">
        <div class="blocks">
          <template v-for="(b, i) in g.blocks" :key="i">
            <button v-if="b.big" class="big" :class="{ wide: b.wide, full: b.full }">
              <svg><use :href="'#' + b.big" /></svg>
              <span>{{ b.text }}</span>
              <i v-if="b.drop" class="tri"></i>
            </button>
            <div v-else class="stack">
              <button v-for="r in b.rows" :key="r.text" class="small" :class="{ off: r.off }">
                <svg><use :href="'#' + r.icon" /></svg>
                <span>{{ r.text }}</span>
                <i v-if="r.drop" class="tri"></i>
              </button>
            </div>
          </template>
        </div>
        <button class="caption">{{ g.label }}<i class="tri"></i></button>
      </div>
    </section>

    <main>
      <aside>
        <div class="sidetabs">
          <button class="active"><svg><use href="#tree-ico" /></svg>模型树</button>
          <button class="browse"><svg><use href="#folders" /></svg>文件夹浏览器</button>
          <button><svg><use href="#favorite" /></svg>收藏夹</button>
        </div>
        <div class="treehead">
          <h2>模型树</h2>
          <button aria-label="设置"><svg><use href="#tools" /></svg></button>
          <button class="drop" aria-label="设置选项"><i class="tri"></i></button>
          <button aria-label="显示"><svg><use href="#list" /></svg></button>
          <button class="drop" aria-label="显示选项"><i class="tri"></i></button>
          <button class="eye" aria-label="隐藏"><svg><use href="#tree-eye" /></svg></button>
        </div>
        <div class="filter">
          <svg class="funnel"><use href="#funnel" /></svg>
          <div class="field">
            <input v-model="filter" type="text" aria-label="过滤模型树" />
            <button aria-label="清除" @click="filter = ''"><svg><use href="#cross" /></svg></button>
          </div>
          <button class="drop" aria-label="过滤选项"><i class="tri"></i></button>
          <button class="plus" aria-label="添加"><svg><use href="#plus" /></svg></button>
        </div>
        <div class="treebox">
          <ul>
            <li class="root"><svg><use href="#part" /></svg>湿化器座.PRT</li>
            <li v-for="n in tree" :key="n.text" :class="{ off: n.off }">
              <span class="expander"><i v-if="n.expand"></i></span>
              <svg><use :href="'#' + n.icon" /></svg>
              <span><sup v-if="n.mark"></sup>{{ n.text }}</span>
            </li>
          </ul>
          <div class="scroll">
            <button aria-label="向上"><i class="tri up"></i></button>
            <div class="thumb"></div>
            <div class="rest"></div>
            <button aria-label="向下"><i class="tri pale"></i></button>
          </div>
        </div>
      </aside>

      <div class="view">
        <svg class="model" viewBox="305 171 1135 654">
          <defs>
            <linearGradient id="m-wall" gradientUnits="userSpaceOnUse" x1="551" y1="0" x2="740" y2="0">
              <stop offset="0" stop-color="#8aa5a6" /><stop offset=".15" stop-color="#9fbfc1" /><stop offset=".5" stop-color="#a0c5c9" /><stop offset="1" stop-color="#abd5dc" />
            </linearGradient>
            <linearGradient id="m-floor" gradientUnits="userSpaceOnUse" x1="585" y1="570" x2="740" y2="610">
              <stop offset="0" stop-color="#64797a" /><stop offset=".45" stop-color="#809999" /><stop offset="1" stop-color="#a8cdd1" />
            </linearGradient>
            <linearGradient id="m-floor-r" gradientUnits="userSpaceOnUse" x1="730" y1="0" x2="860" y2="0">
              <stop offset="0" stop-color="#a8cdd1" stop-opacity="0" /><stop offset=".6" stop-color="#b0dae0" /><stop offset="1" stop-color="#abd5dc" />
            </linearGradient>
            <linearGradient id="m-dome" gradientUnits="userSpaceOnUse" x1="575" y1="466" x2="612" y2="420">
              <stop offset="0" stop-color="#8fabae" /><stop offset="1" stop-color="#abd0d5" />
            </linearGradient>
            <linearGradient id="m-shade" gradientUnits="userSpaceOnUse" x1="612" y1="560" x2="690" y2="600">
              <stop offset="0" stop-color="#859d9d" /><stop offset="1" stop-color="#62787a" />
            </linearGradient>
            <clipPath id="m-open"><path d="M920 457L1107 553L860 625C810 641 760 650 707 650C650 650 590 637 575 612C569 600 571 590 583 577C600 560 625 551 645 543C660 537 675 531 690 526Z" /></clipPath>
          </defs>

          <!-- dome behind the wall -->
          <path d="M575 468C581 440 598 414 614 407L606 440L598 456Z" fill="url(#m-dome)" />
          <path d="M598 455C601 430 609 400 632 397C650 395 672 408 687 423L655 435Z" fill="#566c6d" stroke="#000" />

          <!-- rim, then the opening cut into it -->
          <path d="M919 453L1117 553L860 628C810 644 760 652 707 653C640 652 583 638 570 614C560 598 563 586 577 573C590 561 610 552 627 546L666 529Z" fill="#5a6f6f" stroke="#000" />
          <g clip-path="url(#m-open)">
            <path d="M560 450H1120V660H560Z" fill="url(#m-floor)" />
            <path d="M730 450H1120V660H730Z" fill="url(#m-floor-r)" />
            <path d="M612 560C630 584 655 595 685 600L640 560L625 548Z" fill="url(#m-shade)" />
            <path d="M920 450L992 495L850 537C815 547 780 557 733 559V550L687 526Z" fill="#52676a" stroke="#000" />
            <path d="M627 547C640 575 673 602 700 602C724 602 733 582 733 550L687 527L660 520Z" fill="#566d6f" stroke="#000" />
          </g>
          <path d="M920 457L1107 553L860 625C810 641 760 650 707 650C650 650 590 637 575 612C569 600 571 590 583 577C600 560 625 551 645 543C660 537 675 531 690 526Z" fill="none" stroke="#000" />
          <path d="M850 537L860 627" stroke="#000" />

          <!-- outer walls -->
          <path d="M907 355L683 422L654 433C625 440 600 452 575 468C558 480 551 490 551 504C552 530 558 570 565 597C566 585 570 579 577 573C590 561 610 552 627 546C640 540 652 534 666 529L919 453Z" fill="url(#m-wall)" />
          <path d="M907 355L683 422L654 433C625 440 600 452 575 468C558 480 551 490 551 504M577 573C590 561 610 552 627 546C640 540 652 534 666 529L919 453" fill="none" stroke="#000" />
          <path d="M907 355L1105 455L1117 553L919 453Z" fill="#576c6c" stroke="#000" />
          <path d="M654 433L666 529" stroke="#000" />

          <path d="M641 472L641 476L608 480L590 486L573 502L562 526L560 548L563 565L575 580L588 598L600 604L622 611L650 622L680 626L752 626L761 620L767 611L776 600L779 580L778 558L770 542L758 530L738 514L706 497L678 487L660 480L641 473" fill="none" stroke="#3c10f5" stroke-width="8" stroke-linejoin="round" stroke-linecap="round" />

          <path d="M811 628L821 632" stroke="#702030" /><circle cx="811" cy="627" r="3" fill="#a80c30" />
          <path d="M804 637L820 632" stroke="#35b84a" /><circle cx="804" cy="637" r="2.500" fill="#28e03a" />
          <path d="M821 638L822 650" stroke="#a5c8ff" /><circle cx="822" cy="650" r="2.500" fill="#7ab0ff" />
        </svg>
        <div class="viewbar">
          <button v-for="t in viewTools" :key="t.label" :class="{ on: t.on, more: t.more }" :aria-label="t.label"><svg><use :href="'#' + t.icon" /></svg></button>
        </div>
        <span class="mode">個人模式</span>
      </div>
    </main>

    <footer class="status">
      <button class="on" aria-label="模型树"><svg><use href="#tree-ico" /></svg></button>
      <button aria-label="浏览器"><svg><use href="#globe" /></svg></button>
      <button aria-label="全屏"><svg><use href="#page-ico" /></svg></button>
      <p>湿化器座 重新生成已完成，7 个隐含的特征或元件。</p>
      <div class="find">
        <button aria-label="查找"><svg><use href="#binoc" /></svg></button>
        <button class="drop" aria-label="查找选项"><i class="tri"></i></button>
      </div>
      <div class="combo">
        <select v-model="scope" aria-label="选择过滤器"><option>几何</option></select>
        <i class="tri"></i>
      </div>
    </footer>

    <div class="taskbar">
      <button aria-label="开始"><svg class="sys"><use href="#start" /></svg></button>
      <button aria-label="任务视图"><svg class="sys"><use href="#taskview" /></svg></button>
      <div class="apps">
        <button v-for="t in taskItems" :key="t.label" :class="{ on: t.on }" :aria-label="t.label">
          <span v-if="t.icon === 'ps'" class="ps">Ps</span>
          <svg v-else><use :href="'#' + t.icon" /></svg>
        </button>
      </div>
      <div class="tray">
        <button class="q" aria-label="Q"><b>Q</b></button>
        <button aria-label="显示隐藏的图标"><svg><use href="#tray-up" /></svg></button>
        <button aria-label="安全"><svg><use href="#tray-ball" /></svg></button>
        <button aria-label="网络"><svg><use href="#tray-net" /></svg></button>
        <button aria-label="音量"><svg><use href="#tray-vol" /></svg></button>
        <button>中</button>
        <button class="q ime" aria-label="输入法"><b>Q</b></button>
        <time>9:34<br />2019/6/9</time>
        <button class="note" aria-label="通知"><svg><use href="#notify" /></svg></button>
      </div>
    </div>

    <div class="stamp">
      <svg viewBox="0 0 60 62">
        <path d="M44 56C26 46 9 34 5 18C2 6 14 3 26 11C38 21 40 32 32 37C22 40 6 28 4 12" fill="none" stroke="#5d7891" stroke-width="3" />
        <path d="M34 28C42 18 56 20 56 32C55 46 43 60 33 55C26 48 30 38 38 34" fill="none" stroke="#a8434e" stroke-width="3" />
      </svg>
      <div>
        <strong>野火论坛</strong>
        <span>www.proewildfire.cn</span>
      </div>
    </div>

    <div class="monitor">
      <div class="gauge">37%</div>
      <div class="rates">
        <span><b class="red">↑</b>0K/s</span>
        <span><b class="green">↓</b>0K/s</span>
      </div>
      <button aria-label="加速"><svg viewBox="0 0 16 16"><circle cx="8" cy="8" r="8" fill="#3b7bd4" /><path d="M8 4v8M4 8h8" stroke="#fff" stroke-width="2" /></svg></button>
    </div>
  </div>
</template>

<style>
  body{
    background: #f0f0f0;
  }
</style>

<style scoped>
  .page{
    position: relative;
    display: flex;
    flex-direction: column;
    min-height: 100vh;
    font-family: "Open Sans", "Noto Sans CJK SC", sans-serif;
    font-size: 12px;
    color: #333;
    overflow: hidden;
  }
  .page *{
    box-sizing: border-box;
  }
  .sprite{
    position: absolute;
    width: 0;
    height: 0;
  }
  svg{
    display: block;
    flex: none;
    width: 16px;
    height: 16px;
  }
  button{
    display: flex;
    align-items: center;
    justify-content: center;
    flex: none;
    padding: 0;
    border: 0;
    background: none;
    font: inherit;
    color: inherit;
    white-space: nowrap;
  }
  h1, h2, p, ul{
    margin: 0;
    padding: 0;
  }
  .tri{
    flex: none;
    border: 4px solid transparent;
    border-top-color: #666;
    border-bottom-width: 0;
  }
  .tri.up{
    border-top-width: 0;
    border-bottom: 4px solid #888;
  }
  .tri.pale{
    border-top-color: #aaa;
  }
  .drop{
    width: 14px;
  }

  .titlebar{
    display: grid;
    grid-template-columns: 1fr auto 1fr;
    align-items: center;
    height: 32px;
    padding-bottom: 4px;
    background: #e3e3e3;
  }
  .titlebar h1{
    font-size: 13px;
    font-weight: 400;
    line-height: 20px;
    color: #222;
  }
  .quick{
    display: flex;
    align-items: center;
  }
  .quick .logo{
    width: 40px;
  }
  .bar{
    width: 1px;
    height: 24px;
    margin: 0 1px;
    background: #bcbcbc;
  }
  .tool{
    width: 24px;
    height: 24px;
  }
  .tool.on{
    background: #d3dce2;
    border: 1px solid #9fb3bf;
  }
  .custom{
    flex-direction: column;
    gap: 1px;
    width: 18px;
  }
  .custom::before{
    content: "";
    width: 8px;
    height: 1px;
    background: #333;
  }
  .custom .tri{
    border-top-color: #333;
  }
  .winctl{
    display: flex;
    justify-content: flex-end;
    padding-right: 4px;
  }
  .winctl button{
    width: 27px;
    height: 24px;
  }
  .winctl svg{
    width: 12px;
    height: 12px;
  }

  .tabs{
    display: flex;
    height: 26px;
    background: #e3e3e3;
    border-bottom: 1px solid #d0d0d0;
    font-size: 15px;
  }
  .tabs > button{
    width: 71px;
    height: 25px;
    padding-bottom: 2px;
    background: #cbcdcf;
    border-right: 1px solid #dcdcdc;
    color: #555;
  }
  .tabs > button.long{
    width: 100px;
  }
  .tabs > button.file{
    width: 80px;
    background: #666;
    color: #fff;
    border: 0;
  }
  .tabs > button.active{
    height: 26px;
    background: #f9f9f9;
    color: #111;
  }
  .help{
    display: flex;
    margin-left: auto;
    padding-bottom: 8px;
  }
  .help button{
    width: 24px;
  }
  .help .drop{
    width: 13px;
  }

  .ribbon{
    display: grid;
    grid-template-columns: 129px 107px 151px 123px 151px 215px 127px 70px;
    height: 113px;
    background: linear-gradient(#f9f9f9 87px, #efefef 87px);
    border-bottom: 1px solid #9a9a9a;
  }
  .group{
    display: flex;
    flex-direction: column;
    border-right: 1px solid #c4c4c4;
  }
  .blocks{
    display: flex;
    height: 87px;
  }
  .big{
    flex-direction: column;
    justify-content: flex-start;
    width: 46px;
    padding-top: 6px;
    line-height: 20px;
  }
  .big:last-child{
    margin-left: auto;
  }
  .big.wide{
    width: 62px;
  }
  .big.full{
    flex: 1;
  }
  .big svg{
    width: 32px;
    height: 32px;
    margin-bottom: 8px;
  }
  .big .tri{
    margin-top: 4px;
  }
  .stack{
    min-width: 52px;
  }
  .stack:first-child{
    min-width: 84px;
    padding-left: 7px;
  }
  .small{
    justify-content: flex-start;
    gap: 4px;
    height: 28px;
  }
  .small .tri{
    margin-left: 2px;
  }
  .off{
    color: #b4b4b4;
  }
  .off .tri{
    border-top-color: #999;
  }
  .caption{
    gap: 2px;
    height: 24px;
  }

  main{
    display: flex;
    flex: 1;
  }
  aside{
    display: flex;
    flex-direction: column;
    width: 305px;
    border-top: 2px solid #9a9a9a;
    border-right: 2px solid #8b9aa8;
    background: #f0f0f0;
  }
  .sidetabs{
    display: flex;
    height: 27px;
    background: #c9c9c9;
  }
  .sidetabs button{
    gap: 4px;
    width: 76px;
    padding-bottom: 2px;
    background: #cfcfcf;
    border: 1px solid #a8a8a8;
    border-width: 0 1px 1px 0;
    color: #777;
  }
  .sidetabs .browse{
    width: 112px;
  }
  .sidetabs svg{
    width: 18px;
    height: 18px;
  }
  .sidetabs .active{
    background: #f0f0f0;
    border-bottom: 0;
    color: #222;
  }
  .treehead{
    display: flex;
    align-items: center;
    height: 29px;
    padding: 0 9px 0 28px;
  }
  .treehead h2{
    flex: 1;
    font-size: 12px;
    font-weight: 500;
    color: #111;
  }
  .treehead svg{
    width: 20px;
    height: 20px;
  }
  .treehead .drop{
    width: 22px;
  }
  .treehead .eye{
    margin-left: 6px;
  }
  .filter{
    display: flex;
    align-items: center;
    height: 29px;
    padding: 0 10px 0 12px;
  }
  .field{
    display: flex;
    flex: 1;
    height: 29px;
    margin-left: 4px;
    background: #fff;
    border: 1px solid #b5b5b5;
  }
  .field input{
    flex: 1;
    min-width: 0;
    border: 0;
    background: none;
    font: inherit;
    outline: none;
  }
  .field button{
    width: 20px;
  }
  .filter .drop{
    width: 20px;
  }
  .field svg, .plus svg{
    width: 12px;
    height: 12px;
  }
  .plus{
    width: 20px;
  }
  .treebox{
    display: flex;
    flex: 1;
    margin: 3px 6px 6px 8px;
    border-top: 1px solid #bbb;
    background: #fcfcfc;
  }
  .treebox ul{
    flex: 1;
    list-style: none;
  }
  .treebox li{
    display: flex;
    align-items: center;
    height: 24px;
    padding-left: 8px;
    color: #444;
  }
  .treebox li svg{
    margin-right: 5px;
  }
  .treebox .root{
    padding-left: 3px;
  }
  .treebox .off{
    color: #bbb;
  }
  .expander{
    width: 15px;
  }
  .expander i{
    display: block;
    width: 0;
    border: 4px solid transparent;
    border-left: 8px solid #777;
    border-right: 0;
  }
  sup{
    display: inline-block;
    width: 4px;
    height: 5px;
    margin-right: 2px;
    background: #444;
  }
  .scroll{
    display: flex;
    flex-direction: column;
    width: 15px;
    border: 1px solid #bbb;
    background: #f9f9f9;
  }
  .scroll button{
    height: 14px;
  }
  .thumb{
    flex: 421;
    border: 1px solid #b0b0b0;
    border-width: 1px 0;
  }
  .rest{
    flex: 105;
    background: #dedede;
  }

  .view{
    position: relative;
    flex: 1;
    background: linear-gradient(#005a99, #001038);
  }
  .model{
    position: absolute;
    inset: 0;
    width: 100%;
    height: 100%;
  }
  .viewbar{
    position: absolute;
    top: 7px;
    left: 50%;
    display: flex;
    width: 323px;
    height: 32px;
    padding: 3px 2px;
    transform: translateX(-50%);
    background: #f6f6f6;
    border: 1px solid #cfd8de;
  }
  .viewbar button{
    position: relative;
    flex: 1;
  }
  .viewbar svg{
    width: 18px;
    height: 18px;
  }
  .viewbar .on{
    margin: 0 1px;
    background: #ddd;
    border: 1px solid #b5b5b5;
  }
  .viewbar .more::after{
    content: "";
    position: absolute;
    right: 2px;
    bottom: 2px;
    border: 2px solid #444;
    border-top-color: transparent;
    border-left-color: transparent;
  }
  .mode{
    position: absolute;
    left: 7px;
    bottom: 78px;
    font-size: 6px;
    line-height: 8px;
    color: #aab4c0;
  }

  .status{
    display: flex;
    align-items: center;
    height: 35px;
    padding: 1px 18px 0 6px;
    border-top: 3px solid #999;
    background: #f0f0f2;
  }
  .status > button{
    width: 22px;
    height: 22px;
    margin-right: 4px;
  }
  .status svg{
    width: 18px;
    height: 18px;
  }
  .status .on{
    background: #ddd;
    border: 1px solid #aaa;
  }
  .status p{
    display: flex;
    align-items: center;
    flex: 1;
    height: 24px;
    margin-left: 5px;
    padding: 0 0 4px 6px;
    border-left: 1px solid #bbb;
    border-right: 1px solid #ccc;
    font-size: 11px;
  }
  .status p::before{
    content: "";
    width: 5px;
    height: 5px;
    margin-right: 5px;
    border-radius: 50%;
    background: #1d5268;
  }
  .find{
    display: flex;
    height: 25px;
    margin-left: 42px;
    border: 1px solid #b8b8b8;
  }
  .find button{
    width: 27px;
  }
  .find .drop{
    width: 18px;
    border-left: 1px solid #c8c8c8;
  }
  .combo{
    display: flex;
    align-items: center;
    width: 178px;
    height: 24px;
    margin-left: 96px;
    padding-right: 4px;
    border: 1px solid #bbb;
    background: #f8f8f8;
  }
  .combo select{
    flex: 1;
    padding: 0 8px;
    border: 0;
    background: none;
    font: inherit;
    color: #666;
    appearance: none;
  }

  .taskbar{
    display: flex;
    height: 40px;
    background: linear-gradient(90deg, #051d21, #182526 80%);
    color: #fff;
  }
  .taskbar > button, .apps button{
    width: 48px;
  }
  .apps{
    display: flex;
    gap: 1px;
    margin-left: 3px;
  }
  .apps button{
    position: relative;
  }
  .apps svg{
    width: 24px;
    height: 24px;
  }
  .apps button::after{
    content: "";
    position: absolute;
    left: 4px;
    right: 4px;
    bottom: 0;
    height: 2px;
    background: #eeb7d0;
  }
  .apps .on{
    background: #495555;
  }
  .apps .on::after{
    left: 0;
    right: 0;
  }
  .ps{
    width: 21px;
    height: 20px;
    background: linear-gradient(#124d9c, #0a2f78);
    color: #8ed1ff;
    font-size: 11px;
    font-weight: 600;
    line-height: 19px;
  }
  /* the clock and tray icons stay readable above the stamp */
  .tray{
    position: relative;
    z-index: 1;
    display: flex;
    align-items: center;
    margin-left: auto;
    padding-right: 21px;
  }
  .tray button{
    width: 24px;
    height: 40px;
  }
  .tray .q{
    margin-right: 4px;
  }
  .tray .ime{
    margin: 0 12px 0 4px;
  }
  .q b{
    width: 14px;
    height: 14px;
    border-radius: 2px;
    background: #fff;
    color: #111;
    font-size: 12px;
    line-height: 14px;
  }
  time{
    width: 60px;
    line-height: 19px;
    text-align: center;
  }
  .tray .note{
    margin-left: 15px;
  }
  .note svg{
    width: 18px;
    height: 18px;
  }

  .stamp{
    position: absolute;
    right: 5px;
    bottom: 5px;
    display: flex;
    width: 206px;
    height: 62px;
    background: rgba(200, 200, 200, 0.45);
    pointer-events: none;
    opacity: 0.8;
  }
  .stamp svg{
    width: 60px;
    height: 62px;
  }
  .stamp div{
    display: flex;
    flex-direction: column;
    padding: 6px 0 0 10px;
  }
  .stamp strong{
    font-size: 29px;
    font-weight: 700;
    line-height: 30px;
    color: #5ba37c;
  }
  .stamp span{
    padding-left: 6px;
    font-size: 13px;
    line-height: 26px;
    color: #7590a0;
  }
  .monitor{
    position: absolute;
    right: 110px;
    bottom: 66px;
    z-index: 1;
    display: flex;
    align-items: center;
    width: 100px;
    height: 34px;
    padding: 2px 6px 0 30px;
    border-radius: 0 17px 17px 0;
    background: linear-gradient(#fff, #dedede);
    box-shadow: 0 2px 3px rgba(0, 0, 0, 0.3);
    font-size: 10px;
    color: #111;
  }
  .gauge{
    position: absolute;
    left: -25px;
    top: -6px;
    width: 46px;
    height: 46px;
    border: 2px solid #e6f3ea;
    border-radius: 50%;
    background: linear-gradient(#0b6b48, #16895a 66%, #35bd52 66%);
    color: #fff;
    font-size: 14px;
    font-weight: 600;
    line-height: 42px;
    text-align: center;
  }
  .rates{
    flex: 1;
    line-height: 15px;
  }
  .rates span{
    display: flex;
    justify-content: space-between;
    padding-right: 5px;
  }
  .rates .red{
    color: #d0383c;
  }
  .rates .green{
    color: #23884c;
  }
</style>
